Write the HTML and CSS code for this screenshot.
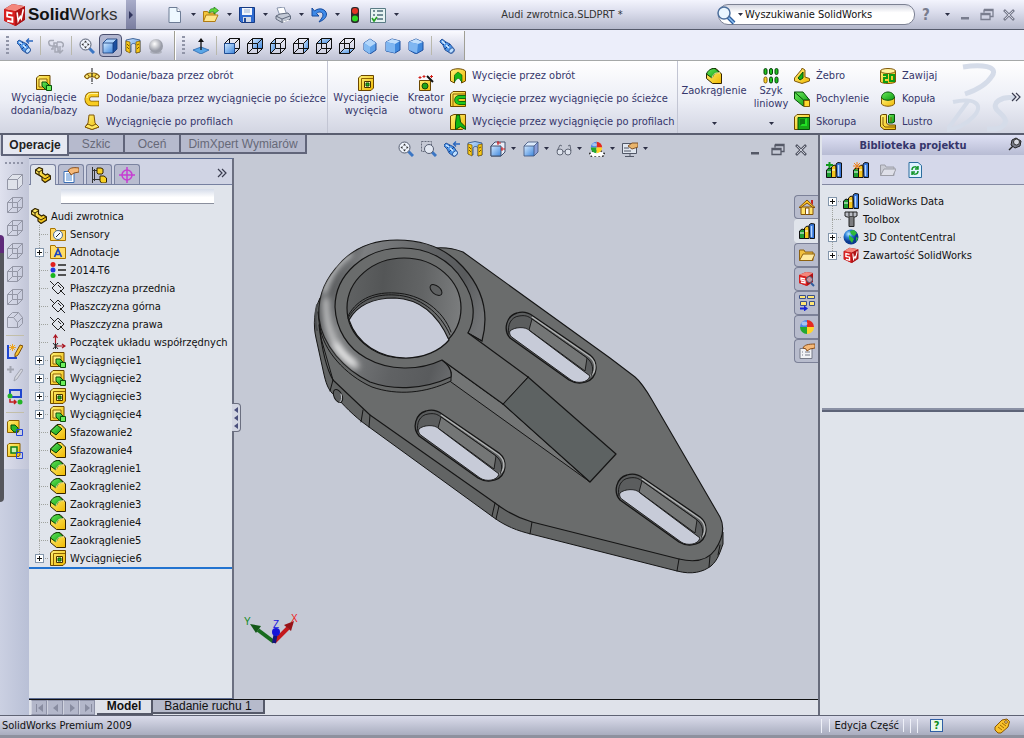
FILE: index.html
```html
<!DOCTYPE html>
<html lang="pl">
<head>
	<meta charset="UTF-8">
	<meta name="viewport" content="width=device-width, initial-scale=1.0">
	<title>Audi zwrotnica.SLDPRT</title>
	<link rel="stylesheet" href="styles.css">
</head>
<body>
	<!-- icon set -->
	<svg class="defs" width="0" height="0">
		<defs>
			<linearGradient id="gy" x2="1" y2="1"><stop stop-color="#fff27a"/><stop offset="1" stop-color="#efb800"/></linearGradient>
			<linearGradient id="gb" x2="1" y2="1"><stop stop-color="#d3e9ff"/><stop offset="1" stop-color="#3d86dc"/></linearGradient>
			<linearGradient id="gg" x2="1" y2="1"><stop stop-color="#6bea5a"/><stop offset="1" stop-color="#0b9a12"/></linearGradient>
			<radialGradient id="gs" cx=".4" cy=".35"><stop stop-color="#fff"/><stop offset="1" stop-color="#9a9da8"/></radialGradient>
			<radialGradient id="globe" cx=".35" cy=".3"><stop stop-color="#b8ecff"/><stop offset=".5" stop-color="#2b7fd8"/><stop offset="1" stop-color="#0c3a90"/></radialGradient>
		</defs>
		<symbol id="arr" viewBox="0 0 7 4"><path d="M1 0h5L3.500 3z" fill="#2c2f45"/></symbol>
		<symbol id="sw" viewBox="0 0 20 22"><path d="M0 6L8 1l12 2v13l-9 6L0 17z" fill="#8d0c10"/><path d="M0 6L8 1l12 2-9 5z" fill="#f4867c"/><path d="M0 6l11 2v14L0 17z" fill="#d91f1f"/><path d="M11 8l9-5v13l-9 6z" fill="#b01216"/><path d="M8 10L3 9v4l5 1v4l-5-1" fill="none" stroke="#fff" stroke-width="1.800"/><path d="M12.500 9l1 8 2-4 1 2 2-9" fill="none" stroke="#fff" stroke-width="1.500"/></symbol>
		<symbol id="new" viewBox="0 0 16 16"><path d="M2 .5h8l3.500 4v11H2z" fill="#eef8ff" stroke="#6d7c95"/><path d="M10 .5v4h3.500" fill="#fff" stroke="#6d7c95"/></symbol>
		<symbol id="open" viewBox="0 0 16 16"><path d="M.5 14.500v-10h4l1 1.500H12v8.500z" fill="#f2c63c" stroke="#b07b12"/><path d="M.5 14.500L3 8h12l-3 6.500z" fill="#ffe68a" stroke="#b07b12"/><path d="M6 6C6 2 9 1 11 2V0l4.500 3.500L11 7V5C9 4 8 5 6 6z" fill="#5fd83a" stroke="#1a7c10" stroke-width=".7"/></symbol>
		<symbol id="save" viewBox="0 0 16 16"><path d="M.5.5h15v15h-13l-2-2z" fill="#2f6bd0" stroke="#163a83"/><path d="M3 1h10v7H3z" fill="#f2f6fc"/><path d="M5 3h6M5 5h6" stroke="#9fb4d4"/><path d="M4 10h8v5H4z" fill="#d4dbe6"/><path d="M5 11h2v4H5z" fill="#234a96"/></symbol>
		<symbol id="print" viewBox="0 0 16 16"><path d="M2 1l7-1 3 8-7 1z" fill="#fff" stroke="#8894ab"/><path d="M1 9l4-2 8-1 2.500 3v3L7 15.500 1 12z" fill="#c3c9d5" stroke="#626b7d"/><path d="M1 9l6 3 8-3M7 12v3" fill="none" stroke="#626b7d"/><path d="M8 15l6-2" stroke="#fff"/></symbol>
		<symbol id="undo" viewBox="0 0 16 16"><path d="M1 1v8h7L5.500 6.500C8 4 12 5 12 8c0 2-2 4-4 7 5-2 7.500-4.500 7.500-8C15 2 8 0 3.500 4z" fill="#3f8ae8" stroke="#174a9c"/></symbol>
		<symbol id="light" viewBox="0 0 16 16"><rect x="4" width="8" height="16" rx="3" fill="#2a2a2a"/><circle cx="8" cy="4" r="3" fill="#e33224"/><circle cx="8" cy="11.500" r="3" fill="#2cd822"/></symbol>
		<symbol id="opts" viewBox="0 0 16 16"><path d="M.5 1.500h15v14H.5z" fill="#e6f3f2" stroke="#5a7b85"/><path d="M3 4h2M3 8h2M7 4h6M7 8h6M7 12h6" stroke="#4c6d79" stroke-width="1.500"/><path d="M2 11l2 3 3-4" stroke="#22a020" stroke-width="1.600" fill="none"/></symbol>
		<symbol id="lens" viewBox="0 0 20 20"><path d="M12 12l6 6" stroke="#2d5d9e" stroke-width="4"/><path d="M12 12l6 6" stroke="#8dc2f4" stroke-width="1.500"/><circle cx="8" cy="8" r="6" fill="#eaf6ff" stroke="#4d6f9c" stroke-width="1.500"/></symbol>
		<symbol id="scope" viewBox="0 0 16 16"><path d="M1 3L3 1l4 3 4 2 4 5c1 3-2 5-4 4L6 12 4 7 1 4z" fill="#4d94e6" stroke="#123f8c" stroke-width=".8"/><path d="M4 7l3-3M6 11l5-5" stroke="#123f8c"/><path d="M3 3l3 3M7 7l3 3" stroke="#d8ecff" stroke-width="1.500"/><ellipse cx="12.500" cy="12.500" rx="2" ry="3" transform="rotate(45 12.500 12.500)" fill="#bfe0ff" stroke="#123f8c" stroke-width=".7"/></symbol>
		<symbol id="scopeb" viewBox="0 0 16 16"><path d="M0 4l2-2 4 2 4 2 3 5c1 3-2 5-4 4l-4-3-2-4-3-3z" fill="#4d94e6" stroke="#123f8c" stroke-width=".8"/><path d="M3 7l3-3M5 11l5-5" stroke="#123f8c"/><path d="M2 4l3 2M6 7l3 3" stroke="#d8ecff" stroke-width="1.500"/><ellipse cx="11" cy="12.500" rx="2" ry="3" transform="rotate(45 11 12.500)" fill="#bfe0ff" stroke="#123f8c" stroke-width=".7"/><path d="M10 3h6M12 .5L9.500 3 12 5.500" stroke="#2a67bf" fill="none" stroke-width="1.300"/></symbol>
		<symbol id="rel" viewBox="0 0 16 16"><path d="M6 2.500H3a2 2 0 0 0-2 3C1 8 3 8 5 8v3H3M9 4h4c3 1 3 4 1 5M6 5h3v3H6zM7 9h3v5H7zM12 8v6M10 12l2 3 3-3" fill="none" stroke="#a5a8b5" stroke-width="1.500"/></symbol>
		<symbol id="zoom" viewBox="0 0 16 16"><path d="M10 10l5 5" stroke="#3b76c4" stroke-width="3"/><circle cx="6.500" cy="6.500" r="5.500" fill="#eef3fb" stroke="#555d70"/><path d="M6.500 2.500L8 4.500H5zM6.500 10.500L5 8.500h3zM2.500 6.500L4.500 5v3zM10.500 6.500L8.500 8V5z" fill="#333"/></symbol>
		<symbol id="zooma" viewBox="0 0 16 16"><path d="M.5.500h10v10H.5z" fill="none" stroke="#666c7c" stroke-dasharray="2 1"/><path d="M11 11l4 4" stroke="#3b76c4" stroke-width="3"/><circle cx="8" cy="8" r="4.500" fill="#e3e8f2" stroke="#555d70"/></symbol>
		<symbol id="shaded" viewBox="0 0 16 16"><path d="M1 5l4-4h10v10l-4 4H1z" fill="#1c4f9f"/><path d="M1 5h10v10H1z" fill="url(#gb)"/><path d="M1 5l4-4h10l-4 4z" fill="#aed3fb"/><path d="M1 5l4-4h10v10l-4 4H1zM1 5h10v10M11 5l4-4" fill="none" stroke="#153a78" stroke-width=".8"/></symbol>
		<symbol id="style" viewBox="0 0 16 16"><path d="M1 5l4-4h10v10l-4 4H1z" fill="#8a9dd8"/><path d="M1 5h10v10H1z" fill="url(#gb)"/><path d="M1 5l4-4h10l-4 4z" fill="#dcebfc"/><path d="M1 5l4-4h10v10l-4 4H1zM1 5h10v10M11 5l4-4" fill="none" stroke="#3c5078" stroke-width=".8"/></symbol>
		<symbol id="section" viewBox="0 0 16 16"><path d="M1 2l7-1.500L15 2v12l-4 1V7c-1-2-4-2-5 0v7l-5-1z" fill="url(#gb)" stroke="#234b83" stroke-width=".8"/><path d="M1 3l4 1v11l-4-2zM11 4l4-1v11l-4 1z" fill="#f7c91a" stroke="#7d5600" stroke-width=".7"/><path d="M2 6l2 2M2 9l2 2M12 7l2-1M12 11l2-2" stroke="#7d5600"/></symbol>
		<symbol id="sphere" viewBox="0 0 16 16"><ellipse cx="8" cy="14" rx="6" ry="2" fill="#aeb1bd"/><circle cx="8" cy="8" r="7" fill="url(#gs)"/></symbol>
		<symbol id="normal" viewBox="0 0 16 16"><path d="M0 12l8-3 8 3-8 4z" fill="#5aa6e6" stroke="#1d5ba6" stroke-width=".7"/><path d="M8 12V2" stroke="#111" stroke-width="1.300"/><path d="M5 4l3-4 3 4z" fill="#111"/></symbol>
		<symbol id="wire" viewBox="0 0 16 16"><path d="M.5 5.500h10v10H.5zM5.500.5h10v10h-10zM.5 5.500l5-5M10.500 5.500l5-5M.5 15.500l5-5M10.500 15.500l5-5" fill="none" stroke="currentColor"/></symbol>
		<symbol id="vfront" viewBox="0 0 16 16"><path d="M5.500.5h10v10h-10z" fill="none" stroke="currentColor"/><path d="M.5 5.500h10v10H.5z" fill="url(#gb)" stroke="#1f4d94"/><path d="M.5 5.500l5-5M10.500 5.500l5-5M10.500 15.500l5-5" stroke="currentColor"/></symbol>
		<symbol id="vback" viewBox="0 0 16 16"><path d="M5.500.5h10v10h-10z" fill="url(#gb)"/><use href="#wire"/></symbol>
		<symbol id="vleft" viewBox="0 0 16 16"><path d="M.5 5.500l5-5v10l-5 5z" fill="url(#gb)"/><use href="#wire"/></symbol>
		<symbol id="vright" viewBox="0 0 16 16"><path d="M10.500 5.500l5-5v10l-5 5z" fill="url(#gb)"/><use href="#wire"/></symbol>
		<symbol id="vtop" viewBox="0 0 16 16"><path d="M.5 5.500l5-5h10l-5 5z" fill="url(#gb)"/><use href="#wire"/></symbol>
		<symbol id="vbot" viewBox="0 0 16 16"><path d="M.5 15.500l5-5h10l-5 5z" fill="url(#gb)"/><use href="#wire"/></symbol>
		<symbol id="iso" viewBox="0 0 16 16"><path d="M8 1l6 4v7l-6 4-6-4V5z" fill="#5c9fe8" stroke="#1c4f9f"/><path d="M8 1l6 4-6 4-6-4z" fill="#b4d7fb"/><path d="M2 5l6 4v7l-6-4z" fill="#84bbf3"/></symbol>
		<symbol id="dim" viewBox="0 0 16 16"><path d="M1 4l6-3 8 2v9l-5 3-9-2z" fill="#4089dd" stroke="#1c4f9f"/><path d="M1 4l6-3 8 2-5 3z" fill="#c0defc"/><path d="M1 4l9 2v9l-9-2z" fill="#7fb6f1"/></symbol>
		<symbol id="tri" viewBox="0 0 16 16"><path d="M1 4l7-3 7 3v8l-7 4-7-4z" fill="#4089dd" stroke="#1c4f9f"/><path d="M1 4l7-3 7 3-5 2z" fill="#c0defc"/><path d="M1 4l9 2-1 9-8-3z" fill="#7fb6f1"/></symbol>
		<symbol id="extr" viewBox="0 0 16 16"><path d="M.5 3L3 .5h11V12L11 14.500H.5z" fill="url(#gy)" stroke="#6b4700"/><path d="M3 4h8v8H3z" fill="#ffed88" stroke="#8d6300"/><path d="M6 7h4l4 4-4 4-4-4z" fill="url(#gg)" stroke="#07500a"/><path d="M10.500 10.500h5v5h-5z" fill="#6cf05c" stroke="#07500a"/></symbol>
		<symbol id="cut" viewBox="0 0 16 16"><path d="M.5 3L3 .5h12.500V13L13 15.500H.5z" fill="url(#gy)" stroke="#6b4700"/><path d="M3.500 15V3.500H15" fill="none" stroke="#8d6300"/><path d="M6.500 6.500h6v6h-6z" fill="#fff7b0" stroke="#4a3300"/><path d="M8 8h3v3H8z" fill="#25b51e" stroke="#07500a"/></symbol>
		<symbol id="revol" viewBox="0 0 16 16"><path d="M.5 9C1 6 4 5 8 5s7 1 7.500 4l-3 2-2-2h-5l-2 2z" fill="url(#gy)" stroke="#80580a"/><path d="M8 0v16" stroke="#111" stroke-dasharray="4 1"/><circle cx="3" cy="8.500" r="2" fill="#ffef80" stroke="#80580a"/><circle cx="13" cy="8.500" r="2" fill="#ffef80" stroke="#80580a"/></symbol>
		<symbol id="sweep" viewBox="0 0 16 16"><path d="M15 3.500H7C2 3.500 2 12.500 7 12.500h8" fill="none" stroke="#7e5500" stroke-width="5.500"/><path d="M14.500 3.500H7C2 3.500 2 12.500 7 12.500h7.500" fill="none" stroke="#f8cd22" stroke-width="4"/><path d="M14 2.500H7C4 2.500 3 5 3 7" fill="none" stroke="#fff5a0"/></symbol>
		<symbol id="loft" viewBox="0 0 16 16"><path d="M5 1h5l1 8 4 4-7 2.500L1 13l3-4z" fill="url(#gy)" stroke="#80580a"/><path d="M1 13l3-3 4 2 4-2 3 3-7 2.500z" fill="#ffe760" stroke="#80580a"/></symbol>
		<symbol id="wizard" viewBox="0 0 16 16"><path d="M1.500 5.500h11v10h-11z" fill="url(#gy)" stroke="#6b4700"/><circle cx="7" cy="11" r="3" fill="#1fa51b" stroke="#144e08"/><path d="M9 1l6 6" stroke="#111" stroke-width="2"/><path d="M2 1v3M.5 2.500h3M6 0v3M4.500 1.500h3M13.500 0v3M12 1.500h3" stroke="#d1201a"/></symbol>
		<symbol id="cutrev" viewBox="0 0 16 16"><path d="M.5 3c3-3 12-3 15 0v10l-4 2V9c-1-2-6-2-7 0v6l-4-2z" fill="url(#gy)" stroke="#6b4700"/><path d="M4.500 14V7L8 4l4 3v7l-2-2c0-2-3-2-4 0z" fill="#18b818" stroke="#07500a" stroke-width=".6"/></symbol>
		<symbol id="cutsweep" viewBox="0 0 16 16"><path d="M.5 3L3 .5h12.500v15H.5z" fill="url(#gy)" stroke="#6b4700"/><path d="M3 15V3h12" fill="none" stroke="#8d6300"/><path d="M15.500 6H10c-5 0-5 6 0 6h5.500" fill="none" stroke="#07500a" stroke-width="4"/><path d="M15.500 6H10c-5 0-5 6 0 6h5.500" fill="none" stroke="#1ec81e" stroke-width="2.500"/></symbol>
		<symbol id="cutloft" viewBox="0 0 16 16"><path d="M.5 2L4 .5h11.500V13l-3 2.500H.5z" fill="url(#gy)" stroke="#6b4700"/><path d="M6.500 1h3l1 7 5 5v2.500l-5-3-5 3V9z" fill="#12b813" stroke="#07500a"/></symbol>
		<symbol id="fillet" viewBox="0 0 16 16"><path d="M.5 6L6 .5h4L15.500 6v9.500h-9l-6-5z" fill="url(#gy)" stroke="#332400"/><path d="M.5 6C2 2 5 .5 9 .500L13 4C9 5 7 7 6 10z" fill="url(#gg)" stroke="#0a3d08"/><path d="M6 10c1-4 4-6 8-5" stroke="#fff8a8" fill="none"/></symbol>
		<symbol id="chamfer" viewBox="0 0 16 16"><path d="M.5 7L7 .5h4L15.500 5v10.500h-9l-6-5z" fill="url(#gy)" stroke="#332400"/><path d="M.5 7L7 1l5 4-6 6z" fill="url(#gg)" stroke="#0a3d08"/></symbol>
		<symbol id="pattern" viewBox="0 0 16 16"><g fill="#1dc41d" stroke="#07400a"><rect x="1" y=".5" width="3" height="6" rx="1.500"/><rect x="6.500" y=".5" width="3" height="6" rx="1.500"/><rect x="12" y=".5" width="3" height="6" rx="1.500"/><rect x="6.500" y="9" width="3" height="6" rx="1.500"/><rect x="12" y="9" width="3" height="6" rx="1.500"/><rect x="1" y="9" width="3" height="6" rx="1.500" fill="#ffd62a" stroke="#80580a"/></g></symbol>
		<symbol id="rib" viewBox="0 0 16 16"><path d="M.5 10L8 1V0l3 2v7l4.500 1.500V13L8 15.500.5 13z" fill="url(#gy)" stroke="#80580a"/><path d="M4 10l5-6v6l-3 2z" fill="#14b514" stroke="#07500a"/></symbol>
		<symbol id="draft" viewBox="0 0 16 16"><path d="M.5 1H9l6.500 8v6H9L.5 8z" fill="url(#gg)" stroke="#07500a"/><path d="M.5 1l9 8h6M9.500 9v6" stroke="#07500a" fill="none"/><path d="M10 9.500h5.500v6H10z" fill="#ffd92e" stroke="#80580a"/></symbol>
		<symbol id="shell" viewBox="0 0 16 16"><path d="M.5 3L3 .5h12.500V13L13 15.500H.5z" fill="url(#gy)" stroke="#6b4700"/><path d="M4 3.500h11.500v12H4z" fill="#18a818" stroke="#07500a"/><path d="M6 5h7v7H6z" fill="#0d7d12"/><path d="M6 12l2-2h5v2zM11 5l2-1v8h-2z" fill="#22e024"/></symbol>
		<symbol id="wrap" viewBox="0 0 16 16"><path d="M.5 3v11c3 2 12 2 15 0V3z" fill="url(#gy)" stroke="#80580a"/><ellipse cx="8" cy="3" rx="7.500" ry="2.500" fill="#fff19a" stroke="#80580a"/><path d="M3 7h4v3H4v4h4M10 7h4v6h-4z" fill="none" stroke="#0e9b12" stroke-width="2"/></symbol>
		<symbol id="dome" viewBox="0 0 16 16"><path d="M1.500 7v6c3 3 10 3 13 0V7z" fill="url(#gy)" stroke="#80580a"/><path d="M1.500 7c0-8 13-8 13 0-3 3-10 3-13 0z" fill="url(#gg)" stroke="#07500a"/></symbol>
		<symbol id="mirror" viewBox="0 0 16 16"><path d="M.5 1.500l2-1h4V9l2 2h7v4.500H4l-3.500-3z" fill="url(#gy)" stroke="#6b4700"/><path d="M8.500 1.500l1-1h5V8l-2 1h-4z" fill="url(#gg)" stroke="#07500a"/><path d="M3 3v8l2 2h10M11 3v5" fill="none" stroke="#80580a"/></symbol>
		<symbol id="part" viewBox="0 0 16 16"><path d="M.5 3L4 .5 7.500 2v4l3 2 2-1 3 2v3L10 15.500 7 13v-3L.5 6z" fill="url(#gy)" stroke="#332400" stroke-width="1.200"/><path d="M.5 3L4 5v3l6 4 5-3M4 5l3-2" fill="none" stroke="#332400"/></symbol>
		<symbol id="sensor" viewBox="0 0 16 16"><path d="M.5 14.500V2.500H5l1 2h9.500v10z" fill="#ffd866" stroke="#a97500"/><circle cx="8" cy="9" r="4.500" fill="#f4faff" stroke="#4f6f95"/><path d="M6 11l4-4" stroke="#222"/></symbol>
		<symbol id="note" viewBox="0 0 16 16"><path d="M.5 14.500V1.500H5l1 2h9.500v11z" fill="#ffdd66" stroke="#a97500"/><path d="M4.500 13L8 5l3.500 8M6 10.500h4" fill="none" stroke="#1a43c4" stroke-width="1.700"/></symbol>
		<symbol id="mat" viewBox="0 0 16 16"><circle cx="3" cy="2.500" r="2.500" fill="#e01f1f"/><circle cx="3" cy="8" r="2.500" fill="#2338e0"/><circle cx="3" cy="13.500" r="2.500" fill="#18b51d"/><path d="M8 3h8M8 8h8M8 13h8" stroke="#222" stroke-width="1.300"/></symbol>
		<symbol id="plane" viewBox="0 0 16 16"><path d="M8 2l6 6-6 6-6-6zM0 1l5 5M10 10l5 5M8 5l3 3" fill="none" stroke="#222"/></symbol>
		<symbol id="origin" viewBox="0 0 16 16"><path d="M5.500 12V1M3.500 4l2-3 2 3M6 12h9M12 10l3 2-3 2" stroke="#aa1420" fill="none" stroke-width="1.200"/><path d="M3 9l5 6M8 9l-5 6M5.500 9v6" stroke="#222"/></symbol>
		<symbol id="prop" viewBox="0 0 16 16"><path d="M1 4.500h10v11H1z" fill="#fff" stroke="#3b6fb5"/><path d="M3 7h6M3 9h6M3 11h6M3 13h6" stroke="#4c89d2"/><path d="M5 4c1-3 5-4 11-3v4l-5 1-3 2-1-2z" fill="#f5b979" stroke="#8a4f1c"/></symbol>
		<symbol id="props" viewBox="0 0 16 16"><path d="M1 5.500h12v10H1z" fill="#f1f2f5" stroke="#777b88"/><path d="M3 9h1M6 9h5M3 12h1M6 12h5" stroke="#777b88"/><path d="M4 5c1-3 5-4 12-4v4l-5 1-3 2-1-2z" fill="#f5b979" stroke="#8a4f1c"/></symbol>
		<symbol id="conf" viewBox="0 0 16 16"><path d="M1.500 0v16M3.500 2v12M1 3.500h6M1 12.500h8" stroke="#333"/><path d="M6 1h4l2 1v4l-1 1H7L6 6z" fill="#f8d024" stroke="#332400"/><path d="M9 9h4l2.500 2v4l-1 1h-4L9 14z" fill="#f8d024" stroke="#332400"/></symbol>
		<symbol id="target" viewBox="0 0 16 16"><circle cx="8" cy="8" r="5" fill="none" stroke="#c63ed2" stroke-width="1.500"/><path d="M8 0v16M0 8h16" stroke="#c63ed2" stroke-width="1.500"/></symbol>
		<symbol id="house" viewBox="0 0 16 16"><path d="M2 8h12v7.500H2z" fill="#ffe26a" stroke="#835207"/><path d="M0 8.500L8 1l8 7.500h-2L8 4 2 8.500z" fill="#ffc52b" stroke="#835207"/><path d="M12 1h2v5l-2-2z" fill="#c5221c"/><path d="M6.500 9h3.500v6.500H6.500z" fill="#fff" stroke="#835207"/></symbol>
		<symbol id="books" viewBox="0 0 16 16"><path d="M.5 8L3 6l3 1v8.500H.5z" fill="#1d9e32" stroke="#111"/><path d="M5.500 5L8 3l2 1v11.500H5.500z" fill="#f5c51d" stroke="#111"/><path d="M10 2l2-1.500L15.500 1v14.500H11z" fill="#3676d8" stroke="#111"/><path d="M12.500 3v11" stroke="#b6d6ff" stroke-width="1.500"/><path d="M1 10h4M6 8h3" stroke="#fff"/></symbol>
		<symbol id="folder" viewBox="0 0 16 16"><path d="M.5 13.500V3H5l1 2h8v8.500z" fill="#f1c03f" stroke="#8f6210"/><path d="M.5 13.500L4 7h12l-3 6.500z" fill="#ffeaa0" stroke="#8f6210"/></symbol>
		<symbol id="swfind" viewBox="0 0 16 16"><path d="M0 4l7-3 7 1v9l-6 4-8-3z" fill="#b01216"/><path d="M0 4l7-3 7 1-6 4z" fill="#f4867c"/><path d="M0 4l8 2v9l-8-3z" fill="#d91f1f"/><path d="M6 8L2 7v2l4 1v2l-4-1" fill="none" stroke="#fff" stroke-width="1.300"/><path d="M12 12l3 3" stroke="#2d5d9e" stroke-width="2"/><circle cx="10.500" cy="8.500" r="3" fill="#e0eefb" fill-opacity=".6" stroke="#44546c"/></symbol>
		<symbol id="palette" viewBox="0 0 16 16"><path d="M.5.500h6v3h-6zM8.500.500h7v3h-7zM1.500 6.500h6v4h-6zM10.500 6.500h5v4h-5z" fill="#ffe675" stroke="#3a4f8a"/><path d="M1 13.500h5" stroke="#1824d4" stroke-width="2"/><path d="M5 10.500l4 3-4 3z" fill="#1824d4"/></symbol>
		<symbol id="ball" viewBox="0 0 16 16"><path d="M8 1a7 7 0 0 1 7 7H8z" fill="#e42a20"/><path d="M8 1a7 7 0 0 0-7 7h7z" fill="#4a86e6"/><path d="M1 8a7 7 0 0 0 7 7V8z" fill="#23a832"/><path d="M15 8a7 7 0 0 1-7 7V8z" fill="#ffd42a"/><ellipse cx="5.500" cy="4.500" rx="3" ry="2" fill="#fff" opacity=".5"/></symbol>
		<symbol id="scene" viewBox="0 0 16 16"><path d="M0 13l4-3h8l4 3-3 3H3z" fill="#fff" stroke="#333" stroke-width="1.500" stroke-dasharray="2 2"/><use href="#ball" x="1" y="0" width="13" height="13"/></symbol>
		<symbol id="screen" viewBox="0 0 16 16"><path d="M.5 2.500h14v10H.5z" fill="#dfe5ee" stroke="#515766"/><path d="M3 15.500h9M8 12v3M2 7h5M2 10h7" stroke="#515766"/><path d="M6 5l4-3h6v4l-6 2z" fill="#e9b46a" stroke="#80542a"/></symbol>
		<symbol id="glasses" viewBox="0 0 16 16"><circle cx="4" cy="11" r="3" fill="#dfe4ee" stroke="#636978"/><circle cx="12" cy="11" r="3" fill="#dfe4ee" stroke="#636978"/><path d="M7 11c0-1 2-1 2 0M1 10l3-6 2 1M15 10l-1-6-2 1" fill="none" stroke="#636978"/></symbol>
		<symbol id="orient" viewBox="0 0 16 16"><path d="M1 5l4-4h10v10l-4 4H1z" fill="#e8edf7" stroke="#42506d"/><path d="M1 5h10v10H1z" fill="url(#gb)" stroke="#42506d"/><path d="M8 0v4M7 2h4M12 6v4M11 8h4" stroke="#cc2020"/></symbol>
		<symbol id="bolt" viewBox="0 0 16 16"><path d="M2 1h12v4l-2 1H4L2 5z" fill="#b9bcc4" stroke="#222"/><path d="M6 6h5v9.500H6z" fill="#d5d7dc" stroke="#222"/><path d="M6 8h5M6 10h5M6 12h5M6 14h5M6 1v4M10 1v4" stroke="#222"/></symbol>
		<symbol id="earth" viewBox="0 0 16 16"><circle cx="8" cy="8" r="7.500" fill="url(#globe)"/><path d="M7 2l4-1 3 3-3 3-3-2zM6 6l5 4-2 4-3-4zM13 8l2 1-2 4z" fill="#2db83a"/></symbol>
		<symbol id="pen" viewBox="0 0 16 16"><path d="M1 2v13h9" fill="none" stroke="#1f46cf" stroke-width="2"/><path d="M13 2l3 1-5 9-3 2V11z" fill="#f7c534" stroke="#7e4e06"/><path d="M5.500 1v7M2 4.500h7M3 2l5 5M8 2L3 7" stroke="#efa51b"/></symbol>
		<symbol id="pen2" viewBox="0 0 16 16"><path d="M3.500 0v7M0 3.500h7" stroke="#a2a5b1" stroke-width="2"/><path d="M14 3l2 1-6 9-3 2 1-4z" fill="#d5d7df" stroke="#a2a5b1"/></symbol>
		<symbol id="conv" viewBox="0 0 16 16"><path d="M3 6V1h11v7H5" fill="none" stroke="#1f46cf" stroke-width="2"/><circle cx="3" cy="7" r="2.500" fill="#24b427"/><circle cx="13" cy="13" r="2.500" fill="#24b427"/><path d="M3 10v3h6M7 11l2 2-2 2" fill="none" stroke="#c21d1d" stroke-width="1.500"/></symbol>
		<symbol id="exsk" viewBox="0 0 16 16"><path d="M.5 2L2 .5h10V11L11 12.500H.5z" fill="url(#gy)" stroke="#8a6000"/><path d="M4 5h4l3 3v4H7L4 9z" fill="#2ab52b" stroke="#07500a"/><path d="M9.500 9.500h6v6h-6z" fill="none" stroke="#2444d8"/></symbol>
		<symbol id="cutsk" viewBox="0 0 16 16"><path d="M.5 2L2 .5h11V12L12 13.500H.5z" fill="url(#gy)" stroke="#8a6000"/><path d="M4 4h6v6H4z" fill="#c7f3b4" stroke="#12801a" stroke-width="1.500"/><path d="M9.500 9.500h6v6h-6z" fill="none" stroke="#2444d8"/></symbol>
		<symbol id="solid" viewBox="0 0 16 16"><path d="M.5 5.500l5-5h10v10l-5 5H.5zM.5 5.500h10v10M10.500 5.500l5-5" fill="#dfe2ea" stroke="currentColor"/></symbol>
		<symbol id="bevel" viewBox="0 0 16 16"><path d="M.5 5.500l5-5h6l4 5v6l-4 4H.500zM.5 5.500h6l4 5v5M6.500 5.500l5-5M10.500 10.500l5-5" fill="none" stroke="currentColor"/></symbol>
		<symbol id="wmin" viewBox="0 0 16 16"><path d="M4 10h8v2.500H4z" fill="currentColor"/></symbol>
		<symbol id="wres" viewBox="0 0 16 16"><path d="M5 2.500h9v7h-3M5 2.500v3M2 6.500h9v6H2zM2 7.500h9M5 3.500h9" fill="none" stroke="currentColor" stroke-width="1.300"/></symbol>
		<symbol id="wclose" viewBox="0 0 16 16"><path d="M3 3l10 10M13 3L3 13" fill="none" stroke="currentColor" stroke-width="2.600"/><path d="M4 4l8 8M12 4l-8 8" stroke="#e4e6f0" stroke-width=".8"/></symbol>
		<symbol id="chev" viewBox="0 0 10 10"><path d="M1 1l4 4-4 4M5 1l4 4-4 4" fill="none" stroke="#3a3d50" stroke-width="1.200"/></symbol>
		<symbol id="pin" viewBox="0 0 14 14"><path d="M1 13l4-4" stroke="#222" stroke-width="1.500"/><path d="M4 3l4-2 5 3-1 5-5 2-4-3z" fill="#777a86" stroke="#222"/><circle cx="8.500" cy="5" r="3" fill="#d6d8e0" stroke="#333"/></symbol>
		<symbol id="refresh" viewBox="0 0 16 16"><path d="M2 .5h9l3.500 3v12H2z" fill="#dff3ff" stroke="#2b6d9e"/><path d="M5 8c0-4 5-4 6-1M11 4v3H8M11 9c0 4-5 4-6 1M5 13v-3h3" fill="none" stroke="#15962c" stroke-width="1.500"/></symbol>
		<symbol id="tag" viewBox="0 0 16 16"><path d="M1 9l7-7 5-1 2.500 2.500L14 9l-7 6H4L1 12z" fill="#f9c22b" stroke="#8b5600"/><circle cx="12" cy="4" r="1.300" fill="#fff" stroke="#8b5600"/><path d="M4 9l4 3M6 7l4 3M8 5l4 3" stroke="#a46b00"/></symbol>
	</svg>

	<header class="titlebar">
		<div class="brand">
			<svg class="brand-cube"><use href="#sw"/></svg>
			<span class="brand-name"><b>Solid</b>Works</span>
			<button class="brand-more" aria-label="Menu"><svg viewBox="0 0 6 8"><path d="M1 0l4 4-4 4z" fill="#30345c"/></svg></button>
		</div>
		<nav class="quick">
			<button class="split" aria-label="Nowy"><svg class="ico"><use href="#new"/></svg><svg class="arr"><use href="#arr"/></svg></button>
			<button class="split" aria-label="Otwórz"><svg class="ico"><use href="#open"/></svg><svg class="arr"><use href="#arr"/></svg></button>
			<button class="split" aria-label="Zapisz"><svg class="ico"><use href="#save"/></svg><svg class="arr"><use href="#arr"/></svg></button>
			<button class="split" aria-label="Drukuj"><svg class="ico"><use href="#print"/></svg><svg class="arr"><use href="#arr"/></svg></button>
			<button class="split" aria-label="Cofnij"><svg class="ico"><use href="#undo"/></svg><svg class="arr"><use href="#arr"/></svg></button>
			<button class="single" aria-label="Przebuduj"><svg class="ico"><use href="#light"/></svg></button>
			<button class="split" aria-label="Opcje"><svg class="ico"><use href="#opts"/></svg><svg class="arr"><use href="#arr"/></svg></button>
		</nav>
		<h1 class="doc-name">Audi zwrotnica.SLDPRT *</h1>
		<div class="search">
			<svg class="search-ico"><use href="#lens"/></svg>
			<svg class="arr"><use href="#arr"/></svg>
			<input type="text" class="search-input" aria-label="Wyszukiwanie" value="Wyszukiwanie SolidWorks">
		</div>
		<div class="win">
			<button class="help">?</button>
			<button aria-label="Pomoc"><svg class="arr"><use href="#arr"/></svg></button>
			<button aria-label="Minimalizuj"><svg class="ico"><use href="#wmin"/></svg></button>
			<button aria-label="Przywróć"><svg class="ico"><use href="#wres"/></svg></button>
			<button aria-label="Zamknij"><svg class="ico"><use href="#wclose"/></svg></button>
		</div>
	</header>

	<div class="toolbars">
		<div class="bar">
			<i class="grip"></i>
			<button class="tool" aria-label="Poprzedni widok"><svg class="ico"><use href="#scopeb"/></svg></button>
			<i class="sep"></i>
			<button class="tool" aria-label="Relacje"><svg class="ico"><use href="#rel"/></svg></button>
			<i class="sep"></i>
			<button class="tool" aria-label="Dopasuj"><svg class="ico"><use href="#zoom"/></svg></button>
			<button class="tool on" aria-label="Cieniowanie"><svg class="ico"><use href="#shaded"/></svg></button>
			<button class="tool" aria-label="Przekrój"><svg class="ico"><use href="#section"/></svg></button>
			<button class="tool" aria-label="Realistyczny"><svg class="ico"><use href="#sphere"/></svg></button>
		</div>
		<div class="bar bar-views">
			<i class="grip"></i>
			<button class="tool" aria-label="Normalny do"><svg class="ico"><use href="#normal"/></svg></button>
			<i class="sep"></i>
			<button class="tool" aria-label="Przód"><svg class="ico"><use href="#vfront"/></svg></button>
			<button class="tool" aria-label="Tył"><svg class="ico"><use href="#vback"/></svg></button>
			<button class="tool" aria-label="Lewo"><svg class="ico"><use href="#vleft"/></svg></button>
			<button class="tool" aria-label="Prawo"><svg class="ico"><use href="#vright"/></svg></button>
			<button class="tool" aria-label="Góra"><svg class="ico"><use href="#vtop"/></svg></button>
			<button class="tool" aria-label="Dół"><svg class="ico"><use href="#vbot"/></svg></button>
			<button class="tool" aria-label="Izometryczny"><svg class="ico"><use href="#iso"/></svg></button>
			<button class="tool" aria-label="Trimetryczny"><svg class="ico"><use href="#dim"/></svg></button>
			<button class="tool" aria-label="Dimetryczny"><svg class="ico"><use href="#tri"/></svg></button>
			<i class="sep"></i>
			<button class="tool" aria-label="Orientacja"><svg class="ico"><use href="#scope"/></svg></button>
		</div>
	</div>

	<section class="ribbon">
		<div class="group">
			<button class="big big-w"><svg class="ico"><use href="#extr"/></svg>Wyciągnięcie dodania/bazy</button>
			<div class="list">
				<button><svg class="ico"><use href="#revol"/></svg>Dodanie/baza przez obrót</button>
				<button><svg class="ico"><use href="#sweep"/></svg>Dodanie/baza przez wyciągnięcie po ścieżce</button>
				<button><svg class="ico"><use href="#loft"/></svg>Wyciągnięcie po profilach</button>
			</div>
		</div>
		<div class="group group-cut">
			<button class="big big-w"><svg class="ico"><use href="#cut"/></svg>Wyciągnięcie wycięcia</button>
			<button class="big"><svg class="ico"><use href="#wizard"/></svg>Kreator otworu</button>
			<div class="list">
				<button><svg class="ico"><use href="#cutrev"/></svg>Wycięcie przez obrót</button>
				<button><svg class="ico"><use href="#cutsweep"/></svg>Wycięcie przez wyciągnięcie po ścieżce</button>
				<button><svg class="ico"><use href="#cutloft"/></svg>Wycięcie przez wyciągnięcie po profilach</button>
			</div>
		</div>
		<div class="group group-feat">
			<button class="big big-w drop"><svg class="ico"><use href="#fillet"/></svg>Zaokrąglenie<svg class="arr"><use href="#arr"/></svg></button>
			<button class="big drop"><svg class="ico"><use href="#pattern"/></svg>Szyk liniowy<svg class="arr"><use href="#arr"/></svg></button>
			<div class="list">
				<button><svg class="ico"><use href="#rib"/></svg>Żebro</button>
				<button><svg class="ico"><use href="#draft"/></svg>Pochylenie</button>
				<button><svg class="ico"><use href="#shell"/></svg>Skorupa</button>
			</div>
			<div class="list">
				<button><svg class="ico"><use href="#wrap"/></svg>Zawijaj</button>
				<button><svg class="ico"><use href="#dome"/></svg>Kopuła</button>
				<button><svg class="ico"><use href="#mirror"/></svg>Lustro</button>
			</div>
		</div>
		<svg class="swoosh" viewBox="0 0 72 70"><g fill="none" stroke="#d5dce9" stroke-width="5"><path d="M16 4C34 1 52 3 45 13C40 21 30 27 18 31"/><path d="M6 39C28 34 38 42 26 54C18 62 9 66 0 67L22 37" stroke-width="4"/><path d="M68 35C54 33 44 40 50 47C56 53 62 57 56 63C52 67 46 66 40 66"/></g></svg>
		<button class="more" aria-label="Więcej"><svg><use href="#chev"/></svg></button>
	</section>

	<main class="main">
		<div class="work">
			<nav class="tabs">
				<button class="tab active">Operacje</button>
				<button class="tab tab-s">Szkic</button>
				<button class="tab tab-s">Oceń</button>
				<button class="tab tab-l">DimXpert Wymiarów</button>
			</nav>

			<aside class="side">
				<i class="grip-h"></i>
				<button aria-label="Przód"><svg class="ico"><use href="#solid"/></svg></button>
				<button aria-label="Tył"><svg class="ico"><use href="#wire"/></svg></button>
				<button aria-label="Lewo"><svg class="ico"><use href="#wire"/></svg></button>
				<button aria-label="Prawo"><svg class="ico"><use href="#wire"/></svg></button>
				<button aria-label="Góra"><svg class="ico"><use href="#wire"/></svg></button>
				<button aria-label="Dół"><svg class="ico"><use href="#wire"/></svg></button>
				<button aria-label="Faza"><svg class="ico"><use href="#bevel"/></svg></button>
				<i class="hsep"></i>
				<button aria-label="Szkic"><svg class="ico"><use href="#pen"/></svg></button>
				<button aria-label="Szkic 3D"><svg class="ico"><use href="#pen2"/></svg></button>
				<button aria-label="Konwertuj"><svg class="ico"><use href="#conv"/></svg></button>
				<i class="hsep"></i>
				<button aria-label="Wyciągnij"><svg class="ico"><use href="#exsk"/></svg></button>
				<button aria-label="Wytnij"><svg class="ico"><use href="#cutsk"/></svg></button>
			</aside>

			<section class="panel">
				<div class="ptabs">
					<button class="ptab active" aria-label="Drzewo operacji"><svg class="ico"><use href="#part"/></svg></button>
					<button class="ptab" aria-label="Właściwości"><svg class="ico"><use href="#prop"/></svg></button>
					<button class="ptab" aria-label="Konfiguracje"><svg class="ico"><use href="#conf"/></svg></button>
					<button class="ptab" aria-label="DimXpert"><svg class="ico"><use href="#target"/></svg></button>
					<button class="pmore" aria-label="Więcej"><svg><use href="#chev"/></svg></button>
				</div>
				<input type="text" class="filter" aria-label="Filtr">
				<div class="root"><svg class="ico"><use href="#part"/></svg>Audi zwrotnica</div>
				<ul class="tree">
					<li><svg class="ico"><use href="#sensor"/></svg>Sensory</li>
					<li><button class="exp" aria-label="Rozwiń"></button><svg class="ico"><use href="#note"/></svg>Adnotacje</li>
					<li><svg class="ico"><use href="#mat"/></svg>2014-T6</li>
					<li><svg class="ico"><use href="#plane"/></svg>Płaszczyzna przednia</li>
					<li><svg class="ico"><use href="#plane"/></svg>Płaszczyzna górna</li>
					<li><svg class="ico"><use href="#plane"/></svg>Płaszczyzna prawa</li>
					<li><svg class="ico"><use href="#origin"/></svg>Początek układu współrzędnych</li>
					<li><button class="exp" aria-label="Rozwiń"></button><svg class="ico"><use href="#extr"/></svg>Wyciągnięcie1</li>
					<li><button class="exp" aria-label="Rozwiń"></button><svg class="ico"><use href="#extr"/></svg>Wyciągnięcie2</li>
					<li><button class="exp" aria-label="Rozwiń"></button><svg class="ico"><use href="#cut"/></svg>Wyciągnięcie3</li>
					<li><button class="exp" aria-label="Rozwiń"></button><svg class="ico"><use href="#extr"/></svg>Wyciągnięcie4</li>
					<li><svg class="ico"><use href="#chamfer"/></svg>Sfazowanie2</li>
					<li><svg class="ico"><use href="#chamfer"/></svg>Sfazowanie4</li>
					<li><svg class="ico"><use href="#fillet"/></svg>Zaokrąglenie1</li>
					<li><svg class="ico"><use href="#fillet"/></svg>Zaokrąglenie2</li>
					<li><svg class="ico"><use href="#fillet"/></svg>Zaokrąglenie3</li>
					<li><svg class="ico"><use href="#fillet"/></svg>Zaokrąglenie4</li>
					<li><svg class="ico"><use href="#fillet"/></svg>Zaokrąglenie5</li>
					<li><button class="exp" aria-label="Rozwiń"></button><svg class="ico"><use href="#cut"/></svg>Wyciągnięcie6</li>
				</ul>
				<button class="handle" aria-label="Zwiń panel"><svg viewBox="0 0 8 26"><path d="M6 2v6L2 5zM6 10v6l-4-3zM6 18v6l-4-3z" fill="#4a4f7c"/></svg></button>
			</section>

			<section class="view">
				<svg class="model" viewBox="234 135 584 564">
					<defs>
						<linearGradient id="boss" gradientUnits="userSpaceOnUse" x1="318" y1="330" x2="460" y2="380">
							<stop stop-color="#5c5e60"/><stop offset=".12" stop-color="#7c7e80"/><stop offset=".3" stop-color="#727476"/><stop offset=".55" stop-color="#606264"/><stop offset=".8" stop-color="#595b5d"/><stop offset="1" stop-color="#727476"/>
						</linearGradient>
						<linearGradient id="bore" gradientUnits="userSpaceOnUse" x1="347" y1="300" x2="461" y2="310">
							<stop stop-color="#606263"/><stop offset=".3" stop-color="#545657"/><stop offset=".65" stop-color="#626465"/><stop offset="1" stop-color="#7b7d7e"/>
						</linearGradient>
						<clipPath id="rim"><path d="M482 341C489 315 484 290 463 267C445 247 420 240 397 240C370 240 350 250 336 268C322 285 318 300 319 318C322 345 345 370 370 382C395 391 425 389 451 377C452 372 450 366 442 360L468 333Z"/></clipPath>
						<filter id="soft" x="-50%" y="-50%" width="200%" height="200%"><feGaussianBlur stdDeviation="3"/></filter>
						<g id="slot" stroke="#151515">
							<path d="M533 316L590 355C599 362 598 378 586 382C580 384 574 383 569 380L510 338C503 330 506 316 517 313C523 311 529 313 533 316Z" fill="#5b5d5e" stroke-width="1.300"/>
							<path d="M532 317L590 357C597 363 596 373 590 376" fill="none" stroke="#b2b4b4" stroke-width="1.500"/>
							<path d="M509 334C507 325 511 317 519 316C525 315 528 316 532 319L587 358C593 363 594 370 591 376" fill="none" stroke-width=".9"/>
							<path d="M532 319L587 358L585 371L529 330Z" fill="#747676" stroke-width=".9"/>
							<path d="M510 331C514 327 526 326 530 331L590 376C588 383 577 384 571 380L513 338C510 336 509 333 510 331Z" fill="#c7cbd8" stroke-width=".9"/>
						</g>
					</defs>
					<g stroke="#151515" stroke-linejoin="round" stroke-linecap="round">
						<!-- side wall and top face of the plate -->
						<path d="M320 298C314 310 313 325 316 338L323 370C326 384 328 390 335 396C344 405 352 415 369 427L493 517C505 526 518 531 531 534L677 571C692 575 703 572 711 566C718 560 720 552 723 544L723 532L400 280Z" fill="#626464" stroke-width="1"/>
						<path d="M436 248C448 247 455 249 463 252L610 358L635 377C641 382 645 388 652 400L720 517C725 527 723 538 715 550C708 560 696 563 679 559L532 522C518 518 508 513 495 503L370 415L333 380C326 368 322 350 319 325Z" fill="#6a6c6c" stroke-width="1.100"/>
						<path d="M363 410L361 422M370 415L369 427M495 503L492 516M499 506L496 519M532 522L530 534M679 559L677 571M710 556L709 567M720 545L718 555M333 380L330 391M318 312L321 338L333 380" fill="none"/>
						<path d="M317 305C315 312 315 325 317 330" fill="none" stroke="#4a4c4e" stroke-width="2"/>
						<ellipse cx="338" cy="396" rx="4" ry="7" transform="rotate(-25 338 396)" fill="#5c5e5f"/>
						<path d="M341 394C342 397 342 400 340 402" fill="none" stroke="#c5c8ce"/>
						<!-- rib -->
						<path d="M442 360L503 404L590 482L451 382Z" fill="#737575"/>
						<path d="M503 404L528 377L616 454L590 482Z" fill="#5d6262" stroke-width="1.200"/>
						<!-- boss -->
						<path d="M320 327C323 350 345 375 372 387C398 396 426 393 451 381L451 372L330 300Z" fill="#656767"/>
						<path d="M482 341C489 315 484 290 463 267C445 247 420 240 397 240C370 240 350 250 336 268C322 285 318 300 319 318C322 345 345 370 370 382C395 391 425 389 451 377C452 372 450 366 442 360L468 333Z" fill="url(#boss)" stroke-width="1.200"/>
						<g clip-path="url(#rim)" fill="none">
							<path d="M324 292C328 277 337 264 350 254" stroke="#f2f3f4" stroke-width="4" filter="url(#soft)"/>
							<path d="M326 300C325 325 333 350 356 366" stroke="#c9cacb" stroke-width="6" filter="url(#soft)"/>
							<path d="M336 345C341 353 347 359 354 363" stroke="#fff" stroke-width="4" filter="url(#soft)"/>
						</g>
						<path d="M468 333C476 318 475 299 463 281C450 259 427 248 402 248C364 248 335 275 335 307C336 330 348 348 366 358C389 371 419 371 442 360L503 404L528 377Z" fill="#6a6c6c" stroke="none"/>
						<path d="M528 377L468 333C476 318 475 299 463 281C450 259 427 248 402 248C364 248 335 275 335 307C336 330 348 348 366 358C389 371 419 371 442 360L503 404" fill="none" stroke-width="1.200"/>
						<path d="M528 377L503 404M468 333L482 341" fill="none"/>
						<ellipse cx="404" cy="308" rx="57" ry="50" fill="url(#bore)" stroke-width="1.200"/>
						<path d="M348 316C358 297 377 292 395 293C421 294 443 310 451 332M348 318C360 298 378 294 395 295C419 296 440 312 450 335" fill="none"/>
						<path d="M349 320C359 302 377 298 395 298C418 299 437 313 449 340C440 351 423 358 406 358C380 358 357 344 349 320Z" fill="#c7cbd8" stroke-width="1.200"/>
						<ellipse cx="436" cy="290" rx="4" ry="7" transform="rotate(-50 436 290)" fill="#5e6061"/>
					</g>
					<use href="#slot"/>
					<use href="#slot" x="-91" y="98"/>
					<use href="#slot" x="110" y="162"/>
					<!-- axis triad -->
					<g stroke-width="4">
						<path d="M274 642L258 630" stroke="#186b1e"/><path d="M250 624l11 2-5 7z" fill="#145818"/>
						<path d="M274 642L288 628" stroke="#c3181c"/><path d="M294 621l-10 4 7 6z" fill="#971317"/>
						<path d="M274 643L276 632" stroke="#14147c"/>
					</g>
					<circle cx="276" cy="632" r="4" fill="#1414d8"/>
					<g class="axis"><text x="244" y="625" fill="#128a1c">Y</text><text x="273" y="628" fill="#1616e0">Z</text><text x="291" y="622" fill="#ee1c20">X</text></g>
				</svg>
				<div class="hud">
					<button aria-label="Dopasuj"><svg class="ico"><use href="#zoom"/></svg></button>
					<button aria-label="Powiększ obszar"><svg class="ico"><use href="#zooma"/></svg></button>
					<button aria-label="Poprzedni widok"><svg class="ico"><use href="#scopeb"/></svg></button>
					<button aria-label="Przekrój"><svg class="ico"><use href="#section"/></svg></button>
					<button class="wide" aria-label="Orientacja"><svg class="ico"><use href="#orient"/></svg><svg class="arr"><use href="#arr"/></svg></button>
					<button class="wide" aria-label="Styl"><svg class="ico"><use href="#style"/></svg><svg class="arr"><use href="#arr"/></svg></button>
					<button class="wide" aria-label="Ukryj"><svg class="ico"><use href="#glasses"/></svg><svg class="arr"><use href="#arr"/></svg></button>
					<button class="wide" aria-label="Scena"><svg class="ico"><use href="#scene"/></svg><svg class="arr"><use href="#arr"/></svg></button>
					<button class="wide" aria-label="Ustawienia"><svg class="ico"><use href="#screen"/></svg><svg class="arr"><use href="#arr"/></svg></button>
				</div>
				<div class="docwin">
					<button aria-label="Minimalizuj"><svg class="ico"><use href="#wmin"/></svg></button>
					<button aria-label="Przywróć"><svg class="ico"><use href="#wres"/></svg></button>
					<button aria-label="Zamknij"><svg class="ico"><use href="#wclose"/></svg></button>
				</div>
				<nav class="vtabs">
					<button aria-label="Zasoby"><svg class="ico"><use href="#house"/></svg></button>
					<button class="active" aria-label="Biblioteka"><svg class="ico"><use href="#books"/></svg></button>
					<button aria-label="Eksplorator"><svg class="ico"><use href="#folder"/></svg></button>
					<button aria-label="Szukaj"><svg class="ico"><use href="#swfind"/></svg></button>
					<button aria-label="Paleta widoków"><svg class="ico"><use href="#palette"/></svg></button>
					<button aria-label="Wyglądy"><svg class="ico"><use href="#ball"/></svg></button>
					<button aria-label="Właściwości"><svg class="ico"><use href="#props"/></svg></button>
				</nav>
			</section>

			<footer class="sheets">
				<button class="nav" aria-label="Pierwszy"><svg viewBox="0 0 10 10"><path d="M1 1h1v8H1zM8 1v8L3 5z"/></svg></button>
				<button class="nav" aria-label="Poprzedni"><svg viewBox="0 0 10 10"><path d="M7 1v8L2 5z"/></svg></button>
				<button class="nav" aria-label="Następny"><svg viewBox="0 0 10 10"><path d="M3 1v8l5-4z"/></svg></button>
				<button class="nav" aria-label="Ostatni"><svg viewBox="0 0 10 10"><path d="M2 1v8l5-4zM8 1h1v8H8z"/></svg></button>
				<button class="sheet active">Model</button>
				<button class="sheet">Badanie ruchu 1</button>
			</footer>
		</div>

		<aside class="library">
			<h2 class="lib-head"><span>Biblioteka projektu</span><svg class="pin"><use href="#pin"/></svg></h2>
			<div class="lib-tools">
				<button aria-label="Dodaj do biblioteki"><svg class="ico"><use href="#books"/></svg><svg class="badge" viewBox="0 0 8 8"><path d="M3.500 0v6M0 3h7" stroke="#119a1c" stroke-width="2"/></svg></button>
				<button aria-label="Dodaj lokalizację"><svg class="ico"><use href="#books"/></svg><svg class="badge" viewBox="0 0 8 8"><path d="M4 0v8M0 4h8M1 1l6 6M7 1L1 7" stroke="#f0801a"/></svg></button>
				<button class="off" aria-label="Nowy folder"><svg class="ico"><use href="#folder"/></svg></button>
				<button aria-label="Odśwież"><svg class="ico"><use href="#refresh"/></svg></button>
			</div>
			<ul class="lib-tree">
				<li><button class="exp" aria-label="Rozwiń"></button><svg class="ico"><use href="#books"/></svg>SolidWorks Data</li>
				<li><svg class="ico"><use href="#bolt"/></svg>Toolbox</li>
				<li><button class="exp" aria-label="Rozwiń"></button><svg class="ico"><use href="#earth"/></svg>3D ContentCentral</li>
				<li><button class="exp" aria-label="Rozwiń"></button><svg class="ico"><use href="#sw"/></svg>Zawartość SolidWorks</li>
			</ul>
			<div class="preview"></div>
		</aside>
		<!-- window showing through at the left screen edge -->
		<i class="edge"></i>
	</main>

	<footer class="status">
		<span class="status-app">SolidWorks Premium 2009</span>
		<i class="tick"></i>
		<span class="status-mode">Edycja Część</span>
		<i class="tick"></i>
		<i class="tick"></i>
		<button class="status-help">?</button>
		<button class="status-tag" aria-label="Znaczniki"><svg class="ico"><use href="#tag"/></svg></button>
	</footer>
</body>
</html>
```
FILE: styles.css
```css
* {
	box-sizing: border-box;
}
body {
	margin: 0; height: 100vh; overflow: hidden;
	display: flex; flex-direction: column;
	font-family: "DejaVu Sans Condensed", "DejaVu Sans", sans-serif;
	font-size: 11px; line-height: 13px; color: #111;
	background-color: #e0e4eb;
}
button {
	margin: 0; padding: 0; border: 0; background: none;
	font: inherit; color: inherit;
}
ul {
	margin: 0; padding: 0; list-style: none;
}
h1, h2 {
	margin: 0; font-size: 11px;
}
svg {
	display: block; flex: none;
}
.defs {
	position: absolute;
}
.ico {
	width: 16px; height: 16px;
}
.arr {
	width: 7px; height: 4px;
}

/* title bar */
.titlebar {
	flex: none; height: 30px; display: flex; align-items: center;
	background: linear-gradient(#f3f4fd, #dcdeed 40%, #b5b9cc);
	border-bottom: 1px solid #555a6b;
}
.brand {
	width: 136px; height: 29px; display: flex; align-items: center;
	padding-left: 4px; gap: 3px; background: linear-gradient(#eceefa, #b9bcd0);
}
.brand-cube {
	width: 21px; height: 23px;
}
.brand-name {
	flex: 1; font-family: "Liberation Sans", sans-serif;
	font-size: 17px; line-height: 20px; color: #333;
}
.brand-name b {
	color: #111;
}
.brand-more {
	width: 10px; height: 29px; padding-left: 2px;
	background: linear-gradient(#a9adca, #7a7ea0);
}
.brand-more svg {
	width: 6px; height: 8px;
}
.quick {
	display: flex; align-items: center; padding-left: 31px;
}
.split {
	width: 36px; display: flex; align-items: center; gap: 7px;
}
.single {
	width: 23px;
}
.doc-name {
	flex: 1; text-align: center; font-weight: normal; color: #333;
}
.search {
	width: 197px; height: 21px; display: flex; align-items: center; gap: 1px;
	border: 1px solid #7c8193; border-radius: 10px;
	background: linear-gradient(#d5d7e2, #fff 40%);
}
.search-ico {
	width: 20px; height: 20px; margin-left: -3px;
}
.search-input {
	flex: 1; min-width: 0; border: 0; padding: 0; outline: 0;
	background: none; font: inherit; color: #111;
}
.win {
	display: flex; align-items: center; gap: 6px; padding: 0 7px 0 7px;
	color: #797d8e;
}
.win .help {
	width: 16px; font-size: 15px; line-height: 16px; font-weight: bold; text-align: left;
}

/* toolbars */
.toolbars {
	flex: none; height: 31px; display: flex; padding-top: 1px;
	background-color: #eceefa; border-bottom: 1px solid #a5a8a8;
}
.bar {
	width: 175px; display: flex; align-items: center; padding-left: 6px;
	background: linear-gradient(#fafaff, #dcdeec 50%, #c0c3d5);
	border-right: 1px solid #a09f95;
}
.bar-views {
	width: 290px; border-left: 1px solid #fff;
}
.grip {
	width: 3px; height: 20px; margin-right: 5px;
	background: repeating-linear-gradient(#9195a8 0 2px, transparent 2px 4px);
}
.tool {
	width: 23px; height: 23px; padding: 3px;
}
.tool.on {
	border: 1px solid #4b5070; border-radius: 4px; padding: 2px;
	background-color: #b3b7d0;
}
.sep {
	width: 1px; height: 19px; margin: 0 4px 0 3px; background-color: #b9b8ac;
}

/* ribbon */
.ribbon {
	flex: none; height: 74px; display: flex; position: relative; overflow: hidden;
	background: linear-gradient(#fff, #eceef6 55%, #d2d5e2);
	border-bottom: 2px solid #5a5e70; color: #35366b;
}
.group {
	display: flex; width: 328px; padding-left: 8px; gap: 4px;
	border-right: 1px solid #c2c5d3;
}
.group-cut {
	width: 350px; padding-left: 2px; gap: 0;
}
.group-feat {
	flex: 1; padding-left: 2px; gap: 2px; border: 0;
}
.big {
	width: 48px; padding-top: 14px; display: flex; flex-direction: column; align-items: center;
}
.big-w {
	width: 72px;
}
.big.drop {
	width: 42px; padding: 7px 0 7px;
}
.big.drop.big-w {
	width: 68px;
}
.drop .arr {
	margin-top: auto;
}
.list {
	padding-top: 3px;
}
.group-feat .list {
	width: 84px; position: relative; z-index: 1;
}
.list button {
	height: 23px; display: flex; align-items: center; gap: 6px; white-space: nowrap;
}
.swoosh {
	position: absolute; right: 5px; top: 2px; width: 72px; height: 70px;
}
.more {
	position: absolute; right: 3px; top: 31px; z-index: 1;
}
.more svg, .pmore svg {
	width: 10px; height: 10px;
}

/* work area */
.main {
	flex: 1; min-height: 0; display: flex; position: relative;
}
.work {
	flex: 1; min-width: 0; display: grid;
	grid-template-columns: 29px 205px 1fr;
	grid-template-rows: 20px 1fr 16px;
	border-right: 2px solid #676b7b;
	background-color: #c5c9d5;
}
.tabs {
	grid-column: 1 / 3; grid-row: 1; z-index: 2;
	display: flex; align-items: flex-start; padding-left: 1px;
	font-family: "Liberation Sans", sans-serif; font-size: 12px; line-height: 16px; color: #666978;
}
.tab {
	flex: none; height: 19px; padding: 0 6px; white-space: nowrap;
	background-color: #b6bacd; border: 2px solid #61657a; border-width: 0 2px 2px 0;
}
.tab-s {
	width: 56px;
}
.tab-l {
	width: 126px;
}
.tab.active {
	width: 68px; height: 21px; padding: 0; font-weight: bold; color: #222;
	background-color: #e6e8f1; border-left-width: 2px;
}
.side {
	grid-column: 1; grid-row: 2 / 4; align-self: stretch;
	display: flex; flex-direction: column; align-items: center;
	padding-top: 7px; color: #9497a6;
	background: linear-gradient(90deg, #dfe1ee, #c2c6d8) top / 100% 314px no-repeat, linear-gradient(90deg, #cbd0e2, #b9c0d6);
}
.side button {
	width: 18px; height: 23px; padding: 3px 1px 4px;
}
.grip-h {
	width: 20px; height: 2px; margin-bottom: 7px;
	background: repeating-linear-gradient(90deg, #9195a8 0 2px, transparent 2px 4px);
}
.hsep {
	width: 18px; height: 1px; margin: 3px 0 4px; background-color: #c2bea8;
}

/* feature tree */
.panel {
	grid-column: 2; grid-row: 2; position: relative;
	display: flex; flex-direction: column; margin-top: 3px;
	background-color: #e0e4eb; border: 1px solid #5b6b91;
	border-width: 1px 2px 1px 0; border-right-color: #6b6f80;
}
.ptabs {
	flex: none; height: 26px; display: flex; align-items: flex-end; gap: 2px; padding-left: 1px;
	background-color: #d0d4e4; border-bottom: 1px solid #7680a0;
}
.ptab {
	width: 26px; height: 20px; display: grid; place-items: center;
	border: 1px solid #7b83a0; border-bottom: 0; border-radius: 3px 3px 0 0;
	background-color: #b9bdd0;
}
.ptab.active {
	height: 21px; margin-bottom: -1px; background-color: #e0e4eb;
}
.pmore {
	margin: 0 5px 6px auto;
}
.filter {
	flex: none; width: 153px; height: 15px; margin: 4px 0 3px 32px; padding: 0;
	border: 0; border-bottom: 1px solid #8a8f9d;
	background: linear-gradient(#d5dcea, #fff 60%);
}
.root {
	height: 18px; display: flex; align-items: center; gap: 4px; padding-left: 2px; flex: none;
}
.tree {
	padding-left: 21px; border-bottom: 2px solid #2273d0;
	background: repeating-linear-gradient(#a0a39f 0 1px, transparent 1px 2px) 10px 0 / 1px 334px no-repeat;
}
.tree li, .lib-tree li {
	height: 18px; display: flex; align-items: center; gap: 4px;
	white-space: nowrap; position: relative;
}
.tree li::before, .lib-tree li::before {
	content: ""; position: absolute; left: -11px; width: 10px; height: 1px;
	background: repeating-linear-gradient(90deg, #a0a39f 0 1px, transparent 1px 2px);
}
.exp {
	position: absolute; left: -15px; top: 5px; width: 9px; height: 9px; z-index: 1;
	border: 1px solid #8396ab;
	background: linear-gradient(#111, #111) center / 5px 1px no-repeat, linear-gradient(#111, #111) center / 1px 5px no-repeat, #fff;
}
.handle {
	position: absolute; right: -9px; top: 244px; width: 9px; height: 29px; z-index: 2;
	background-color: #d3d6e2; border: 1px solid #6b6f80; border-left: 0; border-radius: 0 4px 4px 0;
}
.handle svg {
	width: 8px; height: 26px;
}

/* graphics area */
.view {
	grid-column: 3; grid-row: 1 / 3; position: relative; min-height: 0;
	background-color: #c5c9d5;
}
.model {
	width: 100%; height: 100%;
}
.axis {
	font-family: "Liberation Sans", sans-serif; font-size: 10px;
}
.hud {
	position: absolute; left: 164px; top: 6px; display: flex;
}
.hud button {
	width: 23px; display: flex; align-items: center; gap: 4px;
}
.hud .wide {
	width: 33px;
}
.docwin {
	position: absolute; right: 9px; top: 7px; display: flex; gap: 7px; color: #555967;
}
.vtabs {
	position: absolute; right: 0; top: 60px; width: 24px;
}
.vtabs button {
	width: 24px; height: 24px; display: grid; place-items: center;
	border: 1px solid #7c8198; border-right: 0; border-radius: 4px 0 0 4px;
	background-color: #b8bccd;
}
.vtabs .active {
	background-color: #e0e4eb; border-color: #e0e4eb;
}
.sheets {
	grid-column: 2 / 4; grid-row: 3; display: flex; padding-left: 2px;
	border-top: 1px solid #111; background-color: #dfe2ea;
	font-family: "Liberation Sans", sans-serif; font-size: 12px; line-height: 13px;
}
.nav {
	width: 16px; height: 15px; padding-left: 3px;
	background-color: #b3b7ca; border: 1px solid #8f93a8; border-left-color: #d0d3df;
}
.nav svg {
	width: 10px; height: 10px; fill: #888ca0;
}
.sheet {
	width: 112px; height: 14px; padding: 0; background-color: #b6bacb;
	border: 2px solid #555969; border-width: 0 2px 2px 0;
}
.sheet.active {
	width: 56px; height: 15px; margin-left: 2px; font-weight: bold; background-color: #dfe2ea;
}

/* design library */
.library {
	flex: none; width: 204px; display: flex; flex-direction: column;
	padding-left: 2px; background-color: #e0e4eb;
}
.lib-head {
	flex: none; height: 20px; display: flex; align-items: center; position: relative;
	color: #35366b; background: linear-gradient(#dee0f4, #b8bcd4);
}
.lib-head span {
	flex: 1; text-align: center; padding-right: 20px;
}
.pin {
	position: absolute; right: 2px; top: 2px; width: 14px; height: 14px;
}
.lib-tools {
	flex: none; height: 30px; display: flex; align-items: center; gap: 11px; padding-left: 4px;
	background-color: #d5d8ea; border-bottom: 1px solid #8489a2;
}
.lib-tools button {
	position: relative;
}
.badge {
	position: absolute; left: 0; top: 0; width: 8px; height: 8px;
}
.off {
	filter: grayscale(1); opacity: .5;
}
.lib-tree {
	height: 223px; padding: 7px 0 0 21px;
	background: repeating-linear-gradient(#a0a39f 0 1px, transparent 1px 2px) 10px 15px / 1px 56px no-repeat;
}
.preview {
	flex: 1; border-top: 2px solid #8a90a4; box-shadow: inset 0 2px #5d6377;
}
.edge {
	position: absolute; left: 0; top: 100px; width: 4px; height: 267px;
	border-radius: 0 4px 4px 0;
	background: linear-gradient(#5f2a7a 18px, #55565c 18px);
}

/* status bar */
.status {
	flex: none; height: 23px; display: flex; align-items: center; padding: 0 14px 3px 2px;
	border-top: 1px solid #5f6374;
	background: linear-gradient(#dadceb, #a8acbe 88%, #8e919e 88%);
}
.status-app {
	flex: 1;
}
.status-mode {
	padding: 0 4px; border: 1px solid #eef0f8; border-width: 0 1px;
}
.tick {
	width: 7px; height: 14px; border-right: 1px solid #eef0f8;
}
.status .tick:nth-child(2) {
	margin-right: 7px;
}
.status-help {
	width: 13px; height: 13px; margin: 0 51px 0 12px;
	border: 1px solid #2f5fa5; background-color: #e9f6ec;
	font-weight: bold; line-height: 11px; color: #0a8c18;
}
```
